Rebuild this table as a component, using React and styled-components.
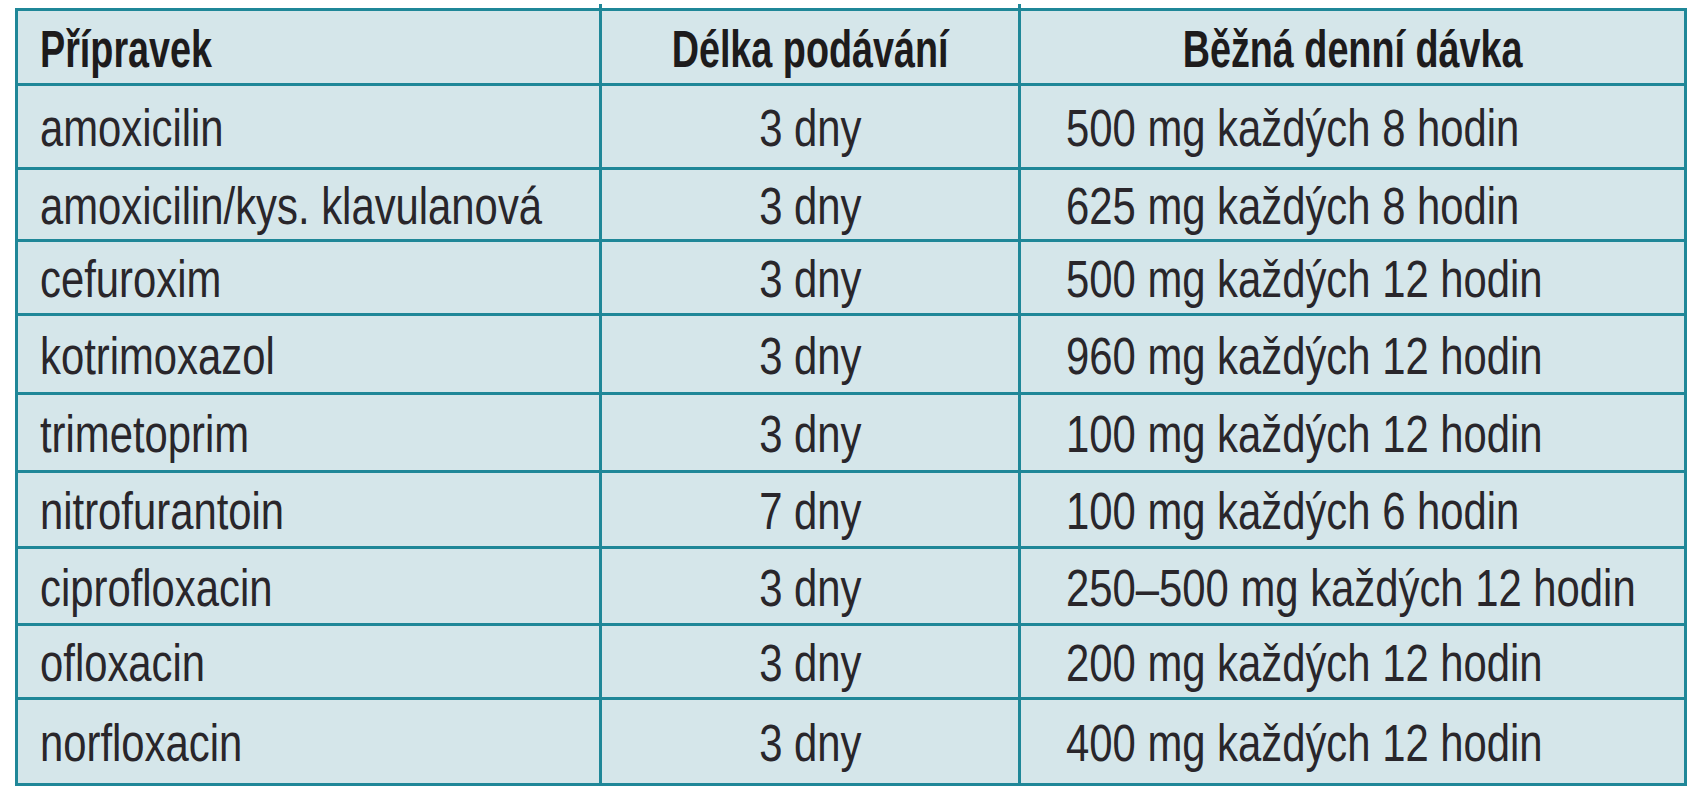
import React from "react";
import styled, { createGlobalStyle } from "styled-components";

const GlobalStyle = createGlobalStyle`
  html, body {
    margin: 0;
    padding: 0;
    background: #ffffff;
  }
`;

const rows = [
  { name: "amoxicilin", days: "3 dny", dose: "500 mg každých 8 hodin", h: 81 },
  { name: "amoxicilin/kys. klavulanová", days: "3 dny", dose: "625 mg každých 8 hodin", h: 69 },
  { name: "cefuroxim", days: "3 dny", dose: "500 mg každých 12 hodin", h: 71 },
  { name: "kotrimoxazol", days: "3 dny", dose: "960 mg každých 12 hodin", h: 76 },
  { name: "trimetoprim", days: "3 dny", dose: "100 mg každých 12 hodin", h: 75 },
  { name: "nitrofurantoin", days: "7 dny", dose: "100 mg každých 6 hodin", h: 73 },
  { name: "ciprofloxacin", days: "3 dny", dose: "250–500 mg každých 12 hodin", h: 74 },
  { name: "ofloxacin", days: "3 dny", dose: "200 mg každých 12 hodin", h: 71 },
  { name: "norfloxacin", days: "3 dny", dose: "400 mg každých 12 hodin", h: 83 },
];

const App = () => {
  return (
    <Page>
      <GlobalStyle />
      <Table>
        <Cell $h={72}>
          <HeadText>Přípravek</HeadText>
        </Cell>
        <Cell $h={72} $align="center">
          <HeadText $align="center">Délka podávání</HeadText>
        </Cell>
        <Cell $h={72} $align="center">
          <HeadText $align="center">Běžná denní dávka</HeadText>
        </Cell>
        {rows.map((r) => (
          <React.Fragment key={r.name}>
            <Cell $h={r.h}>
              <BodyText>{r.name}</BodyText>
            </Cell>
            <Cell $h={r.h} $align="center">
              <BodyText $align="center">{r.days}</BodyText>
            </Cell>
            <Cell $h={r.h} $dose>
              <BodyText>{r.dose}</BodyText>
            </Cell>
          </React.Fragment>
        ))}
      </Table>
    </Page>
  );
};

export default App;

const Page = styled.div`
  padding: 8px 10px 0 15px;
`;

const Table = styled.div`
  position: relative;
  display: grid;
  grid-template-columns: 581px 416px 663px;
  gap: 3px;
  width: max-content;
  border: 3px solid #1f8798;
  background: #1f8798;
  font-family: "Liberation Sans", Arial, sans-serif;

  /* column rules poke a little past the frame, as in the print */
  &::before,
  &::after {
    content: "";
    position: absolute;
    top: -7px;
    width: 3px;
    height: 7px;
    background: #1f8798;
  }
  &::before {
    left: 581px;
  }
  &::after {
    left: 1000px;
  }
`;

const Cell = styled.div`
  display: flex;
  align-items: center;
  justify-content: ${(p) => (p.$align === "center" ? "center" : "flex-start")};
  height: ${(p) => p.$h}px;
  padding: 4px 0 0 ${(p) => (p.$dose ? "45px" : p.$align === "center" ? "0" : "22px")};
  box-sizing: border-box;
  background: #d5e6ea;
  overflow: hidden;
`;

/* the printed face is a condensed grotesque; squeeze the metric-compatible sans */
const BodyText = styled.span`
  display: inline-block;
  font-size: 51px;
  line-height: 1;
  color: #29262b;
  white-space: nowrap;
  transform: scaleX(0.82);
  transform-origin: ${(p) => (p.$align === "center" ? "center" : "left")} center;
`;

const HeadText = styled(BodyText)`
  font-weight: 700;
  color: #1d1b1c;
  transform: scaleX(0.74);
`;
